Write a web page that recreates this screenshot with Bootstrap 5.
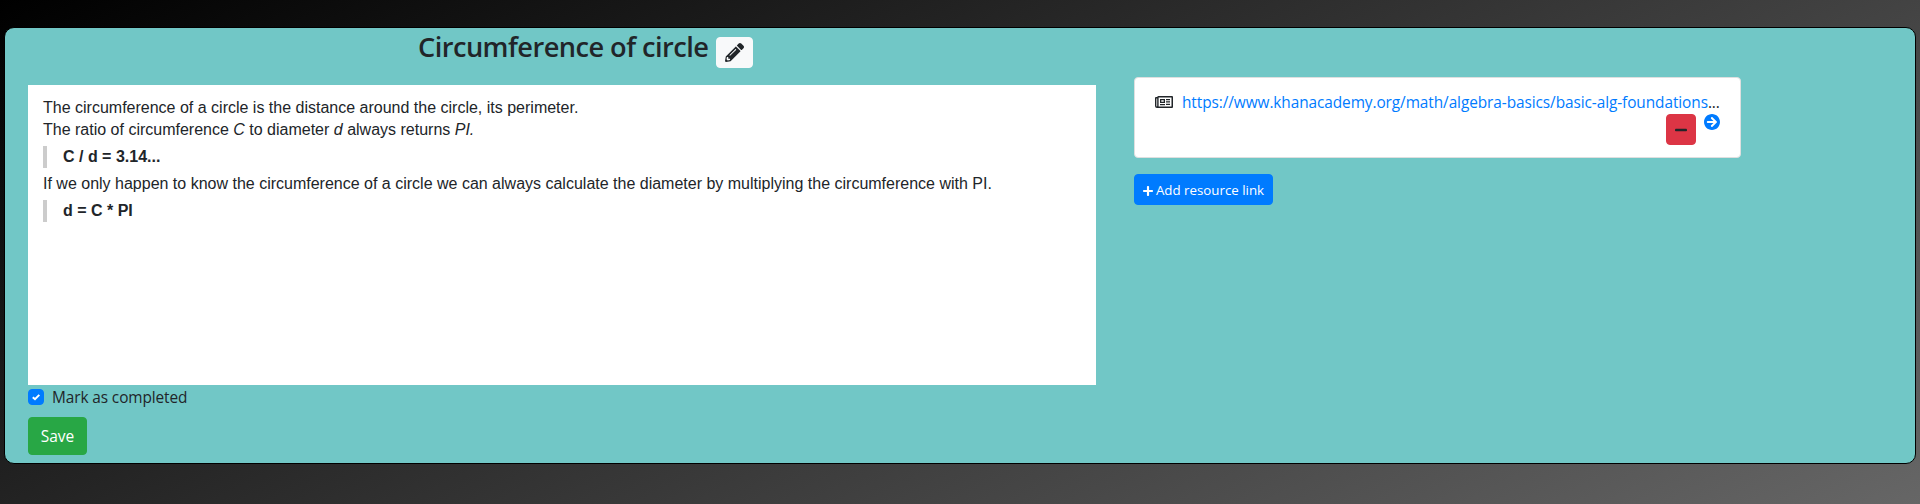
<!DOCTYPE html>
<html lang="en">
<head>
<meta charset="utf-8">
<meta name="viewport" content="width=device-width, initial-scale=1">
<title>Circumference of circle</title>
<link href="https://cdn.jsdelivr.net/npm/bootstrap@5.3.0/dist/css/bootstrap.min.css" rel="stylesheet">
<style>
html{height:100%}
body{min-height:100%;margin:0;padding:27px 4px 0;color:#212529;font-family:"Open Sans","Noto Sans",sans-serif;background:linear-gradient(153deg,#000,#666) no-repeat;overflow:hidden}
svg{fill:currentColor;display:block;flex:none}
.topic{height:437px;background:#71c7c6;border:1px solid #000;border-radius:10px;padding:0 23px}
.topic-main{width:1068px}
.topic-head{height:57px;padding:9px 0 0 390px}
.topic-head h1{font-size:27.2px;font-weight:600;line-height:34px;width:290px;margin:-7px 8px 0 0;white-space:nowrap;letter-spacing:-.54px}
.btn{--bs-btn-border-radius:4px;--bs-btn-border-radius-sm:3.2px}
.btn-edit{--bs-btn-bg:#f8f9fa;--bs-btn-border-color:#f8f9fa;--bs-btn-color:#212529;width:37px;height:31px}
.editor{height:300px;padding:12px 15px;font:16px/22px "Liberation Sans",Arial,sans-serif}
.editor p{margin:0;white-space:nowrap}
.editor blockquote{margin:5px 0;padding-left:16px;border-left:4px solid #ccc;font-size:inherit;font-weight:700}
.check-row{height:24px}
.form-check-input{width:16px;height:16px;margin:0 8px 0 0;border-radius:4px}
.form-check-input:checked{background-color:#007bff;border-color:#007bff;background-size:12px;background-image:url("data:image/svg+xml,%3csvg xmlns='http://www.w3.org/2000/svg' viewBox='0 0 12 12'%3e%3cpath fill='none' stroke='%23fff' stroke-width='2' d='M2.8 6.2 5 8.2 9.3 3.9'/%3e%3c/svg%3e")}
.check-row label{font-size:15.4px;line-height:24px;letter-spacing:-.1px;padding-top:2px}
.btn-save{--bs-btn-bg:#28a745;--bs-btn-border-color:#28a745;width:59px;height:38px;margin-top:8px;font-size:15.5px}
.btn-save span{display:block;padding-top:2px}
.resources{width:607px;margin-left:38px;padding-top:49px}
.resource{height:81px;padding:12px 20px;border-color:#dfdfdf;border-radius:4px}
.resource-link{height:24px;font-size:15.4px;line-height:24px;letter-spacing:-.08px}
.resource-link svg{margin-right:9px}
.resource-link span{padding-top:2px}
.resource-link a{color:#007bff;text-decoration:none}
.btn-remove{--bs-btn-bg:#dc3545;--bs-btn-border-color:#dc3545;--bs-btn-color:#212529;width:30px;height:31px}
.btn-add{--bs-btn-bg:#007bff;--bs-btn-border-color:#007bff;width:139px;height:31px;margin-top:16px;font-size:13.3px;white-space:nowrap}
.btn-add span,.btn-add svg{margin-top:2px}
.btn-add svg{margin-right:3px}
.go{color:#007bff}
</style>
</head>
<body>
<main class="topic d-flex align-items-start">
  <section class="topic-main">
    <header class="topic-head d-flex align-items-start">
      <h1>Circumference of circle</h1>
      <button class="btn btn-light btn-sm btn-edit d-flex align-items-center justify-content-center p-0" aria-label="Edit title">
        <svg width="19" height="19" viewBox="0 0 512 512"><path d="M497.9 142.1l-46.1 46.1c-4.7 4.7-12.3 4.7-17 0l-111-111c-4.7-4.7-4.7-12.3 0-17l46.1-46.1c18.7-18.7 49.1-18.7 67.9 0l60.1 60.1c18.8 18.7 18.8 49.1 0 67.9zM284.2 99.8L21.6 362.4.4 483.9c-2.9 16.4 11.4 30.6 27.8 27.8l121.5-21.3 262.6-262.6c4.7-4.7 4.7-12.3 0-17l-111-111c-4.8-4.7-12.4-4.7-17.1 0zM124.1 339.9c-5.5-5.5-5.5-14.3 0-19.8l154-154c5.5-5.5 14.3-5.5 19.8 0s5.5 14.3 0 19.8l-154 154c-5.5 5.5-14.3 5.5-19.8 0zM88 424h48v36.3l-64.5 11.3-31.1-31.1L51.7 376H88v48z"/></svg>
      </button>
    </header>
    <div class="editor bg-white">
      <p>The circumference of a circle is the distance around the circle, its perimeter.</p>
      <p>The ratio of circumference <em>C</em> to diameter <em>d</em> always returns <em>PI.</em></p>
      <blockquote>C / d = 3.14...</blockquote>
      <p>If we only happen to know the circumference of a circle we can always calculate the diameter by multiplying the circumference with PI.</p>
      <blockquote>d = C * PI</blockquote>
    </div>
    <div class="check-row d-flex align-items-center">
      <input class="form-check-input" type="checkbox" id="done" checked>
      <label for="done">Mark as completed</label>
    </div>
    <button class="btn btn-success btn-save p-0"><span>Save</span></button>
  </section>
  <aside class="resources">
    <div class="resource card">
      <div class="resource-link d-flex align-items-center">
        <svg width="18" height="16" viewBox="0 0 18 16"><path fill-rule="evenodd" d="M3.5 2H17a1 1 0 0 1 1 1v10a1 1 0 0 1-1 1H2a2 2 0 0 1-2-2V4a1 1 0 0 1 1-1h1.2A1.4 1.4 0 0 1 3.500 2zM1.400 4.500V12a.4.4 0 0 0 .8 0V4.500zM3.600 3.500v9H16.500v-9zM5 5h5v4H5zm1.300 1.200v1.600h2.400V6.200zM11 5h4v1.200h-4zm0 2.200h4v1.200h-4zM5 10h5v1.300H5zm6-.3h4V11h-4z"/></svg>
        <span class="text-nowrap"><a href="#">https://www.khanacademy.org/math/algebra-basics/basic-alg-foundations</a>...</span>
      </div>
      <div class="d-flex justify-content-end align-items-start gap-2">
        <button class="btn btn-danger btn-sm btn-remove d-flex align-items-center justify-content-center p-0" aria-label="Remove">
          <svg width="12" height="14" viewBox="0 0 448 512"><path d="M416 208H32c-17.67 0-32 14.33-32 32v32c0 17.67 14.33 32 32 32h384c17.67 0 32-14.33 32-32v-32c0-17.67-14.33-32-32-32z"/></svg>
        </button>
        <a class="go" href="#" aria-label="Open"><svg width="16" height="16" viewBox="8 8 496 496"><path d="M256 8c137 0 248 111 248 248S393 504 256 504 8 393 8 256 119 8 256 8zm-28.9 143.6l75.5 72.4H120c-13.3 0-24 10.7-24 24v16c0 13.3 10.7 24 24 24h182.6l-75.5 72.4c-9.7 9.3-9.9 24.8-.4 34.3l11 10.9c9.4 9.4 24.6 9.4 33.9 0L404.3 273c9.4-9.4 9.4-24.6 0-33.9L271.6 106.3c-9.4-9.4-24.6-9.4-33.9 0l-11 10.9c-9.5 9.6-9.3 25.1.4 34.4z" fill-rule="evenodd"/></svg></a>
      </div>
    </div>
    <button class="btn btn-primary btn-sm btn-add d-flex align-items-center justify-content-center p-0">
      <svg width="10" height="12" viewBox="0 0 448 512"><path d="M416 208H272V64c0-17.67-14.33-32-32-32h-32c-17.67 0-32 14.33-32 32v144H32c-17.67 0-32 14.33-32 32v32c0 17.67 14.33 32 32 32h144v144c0 17.67 14.33 32 32 32h32c17.67 0 32-14.33 32-32V304h144c17.67 0 32-14.33 32-32v-32c0-17.67-14.33-32-32-32z"/></svg>
      <span>Add resource link</span>
    </button>
  </aside>
</main>
<script src="https://cdn.jsdelivr.net/npm/bootstrap@5.3.0/dist/js/bootstrap.bundle.min.js"></script>
</body>
</html>
